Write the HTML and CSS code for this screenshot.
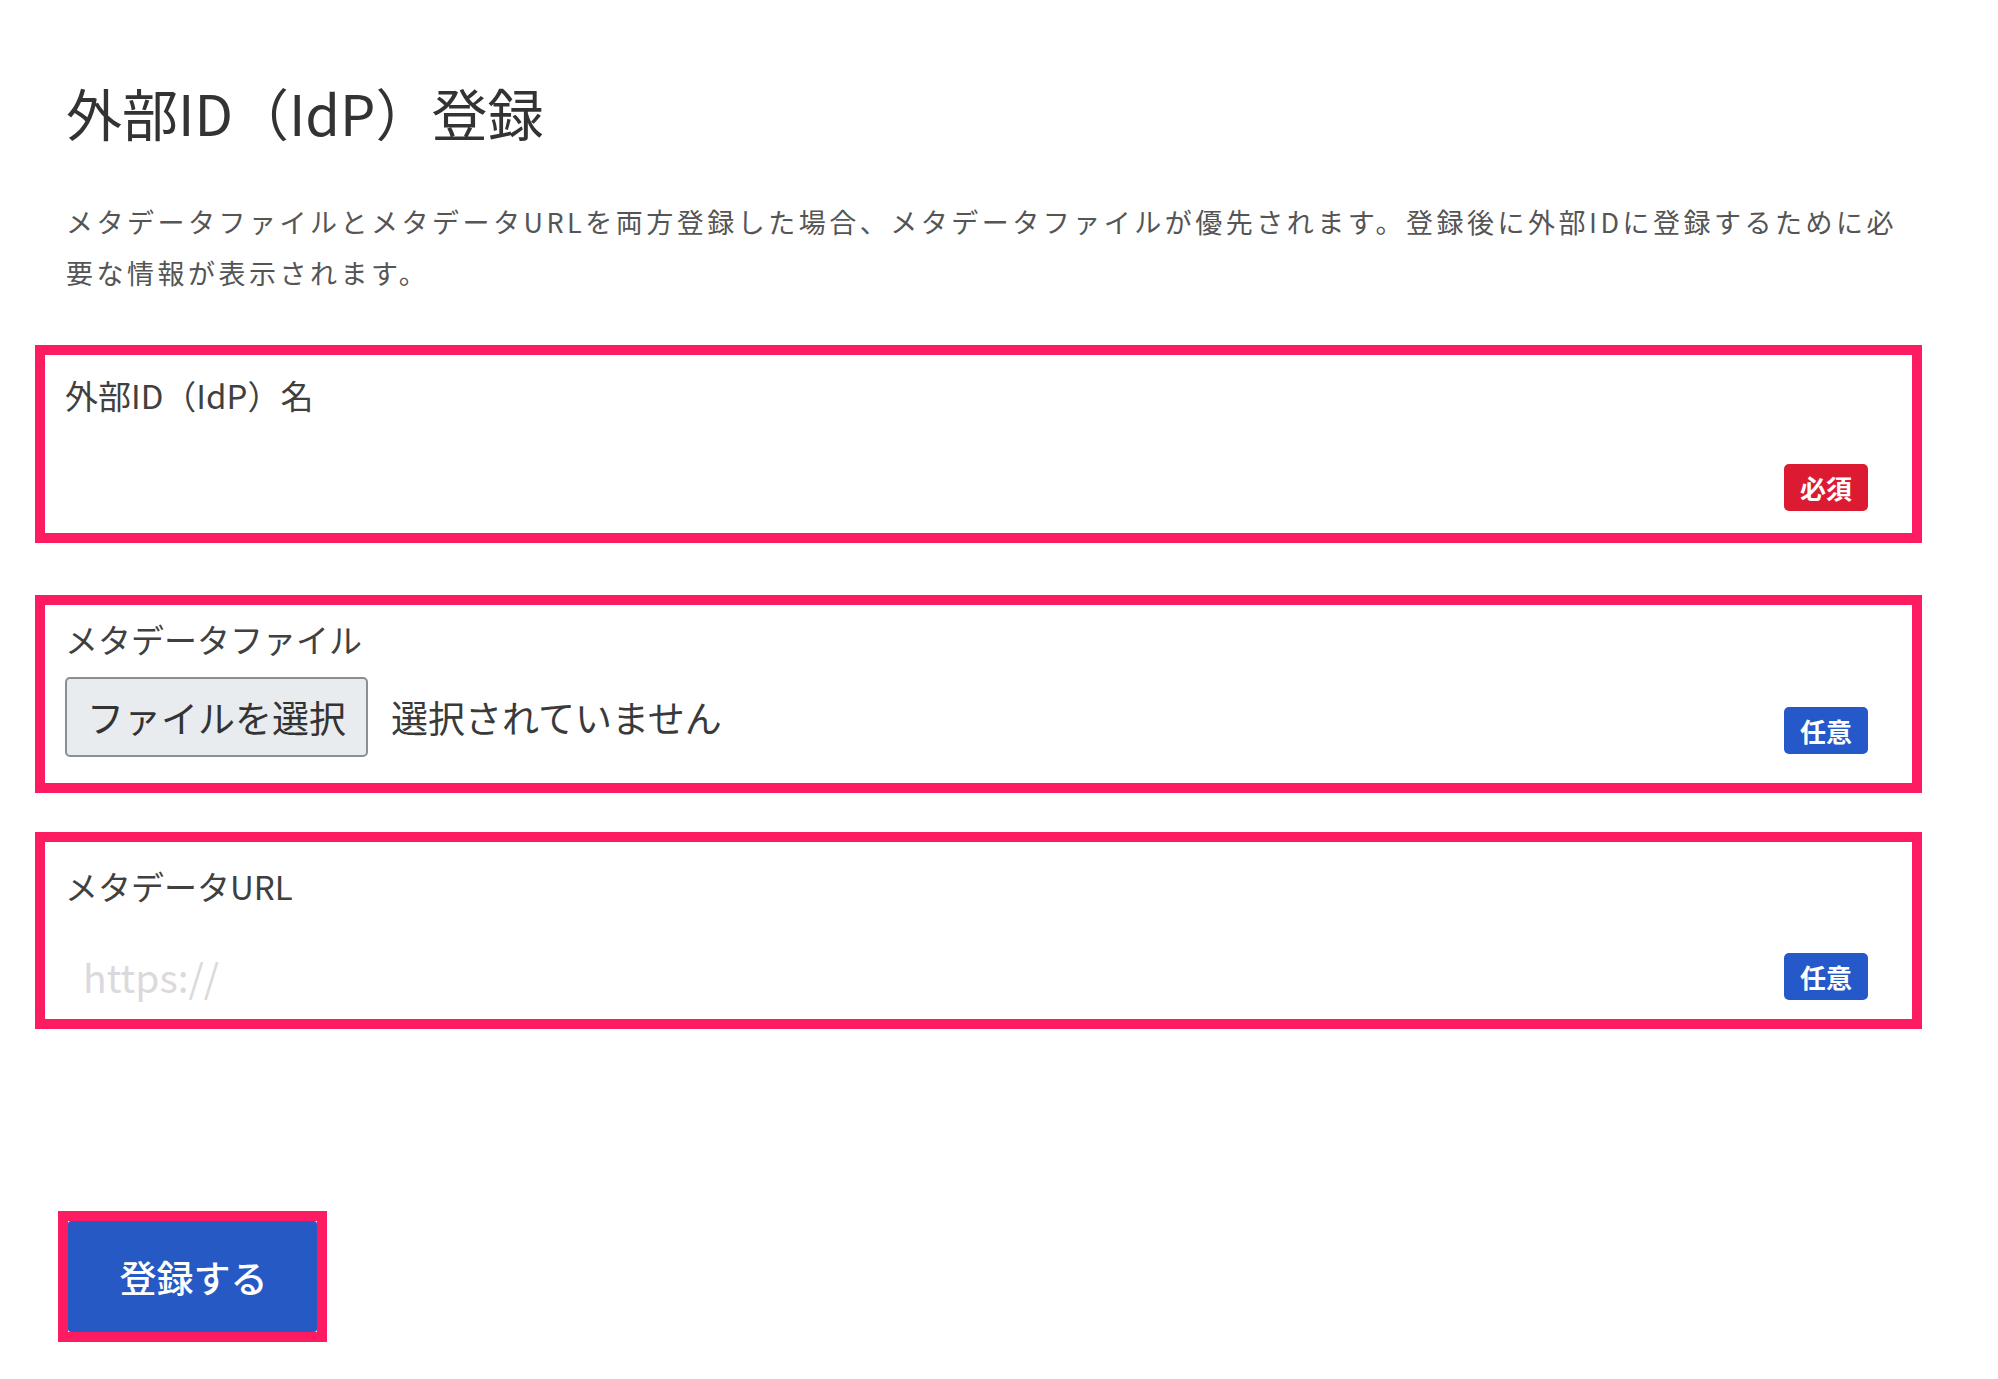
FILE: index.html
```html
<!DOCTYPE html>
<html lang="ja">
<head>
<meta charset="utf-8">
<title>外部ID（IdP）登録</title>
<link rel="stylesheet" href="styles.css">
</head>
<body>
<main class="page">
  <header class="intro">
    <h1 class="title">外部ID（IdP）登録</h1>
    <p class="lead">メタデータファイルとメタデータURLを両方登録した場合、メタデータファイルが優先されます。登録後に外部IDに登録するために必要な情報が表示されます。</p>
  </header>
  <form class="form">
    <div class="group group--name">
      <label class="label" for="idp-name">外部ID（IdP）名</label>
      <div class="row">
        <input id="idp-name" class="text-input" type="text">
        <span class="badge badge--required">必須</span>
      </div>
    </div>
    <div class="group group--file">
      <span class="label">メタデータファイル</span>
      <div class="row">
        <div class="file-field">
          <button type="button" class="file-btn">ファイルを選択</button>
          <span class="file-status">選択されていません</span>
        </div>
        <span class="badge badge--optional">任意</span>
      </div>
    </div>
    <div class="group group--url">
      <label class="label" for="idp-url">メタデータURL</label>
      <div class="row">
        <input id="idp-url" class="text-input" type="text" placeholder="https://">
        <span class="badge badge--optional">任意</span>
      </div>
    </div>
    <div class="actions">
      <span class="submit-frame">
        <button type="button" class="submit-btn">登録する</button>
      </span>
    </div>
  </form>
</main>
</body>
</html>
```

FILE: styles.css
```css
* {
  box-sizing: border-box;
}

html,
body {
  margin: 0;
  background: #ffffff;
}

body {
  font-family: "Noto Sans CJK JP", "Noto Sans", sans-serif;
  color: #333333;
}

.page {
  padding: 72px 76px 0 35px;
}

.intro {
  padding-left: 31px;
}

.title {
  margin: 0;
  font-size: 56px;
  line-height: 80px;
  font-weight: 400;
  color: #333333;
}

.lead {
  margin: 44px 0 0;
  padding-right: 8px;
  font-size: 27px;
  line-height: 51px;
  letter-spacing: 3.5px;
  color: #555555;
}

.form {
  margin-top: 47px;
}

.group {
  border: 10px solid #fd1b61;
  height: 198px;
  padding: 18px 44px 0 20px;
}

.group--file {
  margin-top: 52px;
  padding-top: 12px;
}

.group--url {
  margin-top: 39px;
  padding-top: 22px;
  height: 197px;
}

.label {
  display: block;
  font-size: 33px;
  line-height: 44px;
  color: #404040;
}

.row {
  display: flex;
  align-items: center;
  justify-content: space-between;
  gap: 24px;
}

.group--name .row {
  margin-top: 40px;
}

.group--file .row {
  margin-top: 16px;
}

.group--url .row {
  margin-top: 38px;
}

.text-input {
  flex: 1;
  height: 60px;
  border: none;
  outline: none;
  background: transparent;
  padding: 0 0 0 18px;
  font-family: "Noto Sans CJK JP", "Noto Sans", sans-serif;
  font-size: 39px;
  color: #333333;
}

.text-input::placeholder {
  color: #dcd9dc;
}

.file-field {
  display: flex;
  align-items: center;
  gap: 23px;
}

.file-btn {
  height: 80px;
  padding: 0 20px;
  border: 2px solid #8b8e92;
  border-radius: 5px;
  background: #e9ecef;
  font-family: "Noto Sans CJK JP", sans-serif;
  font-size: 37px;
  color: #333333;
}

.file-status {
  font-size: 37px;
  color: #3a3a3a;
}

.badge {
  flex: none;
  width: 84px;
  height: 47px;
  border-radius: 5px;
  display: flex;
  align-items: center;
  justify-content: center;
  font-size: 26px;
  font-weight: 700;
  color: #ffffff;
}

.badge--required {
  background: #dc1b32;
}

.badge--optional {
  background: #2558c8;
}

.group--file .badge {
  align-self: flex-end;
  margin-bottom: 3px;
}

.actions {
  margin-top: 182px;
  padding-left: 23px;
}

.submit-frame {
  display: inline-flex;
  border: 10px solid #fd1b61;
}

.submit-btn {
  width: 249px;
  height: 111px;
  padding: 0 0 0 2px;
  border: none;
  border-radius: 3px;
  background: #2759c5;
  font-family: "Noto Sans CJK JP", sans-serif;
  font-size: 37px;
  font-weight: 500;
  color: #ffffff;
}
```
